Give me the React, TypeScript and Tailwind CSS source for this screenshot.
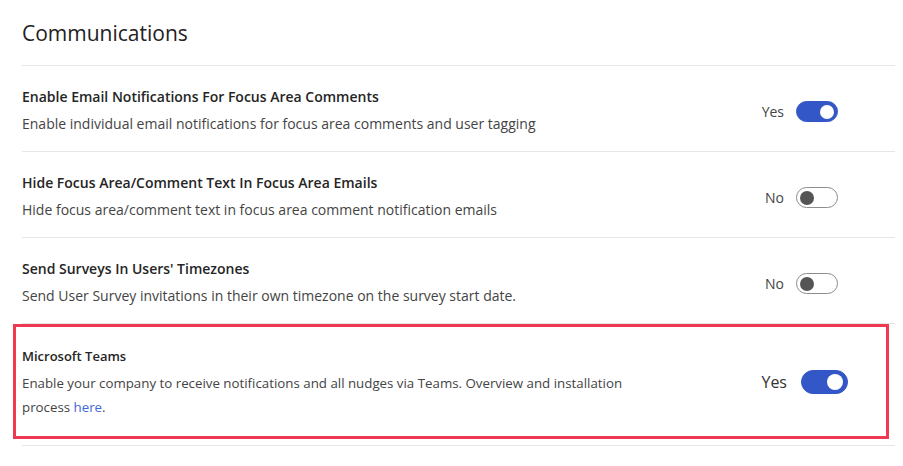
import { useState } from "react";

type Setting = {
  title: string;
  description: string;
  enabled: boolean;
};

const settings: Setting[] = [
  {
    title: "Enable Email Notifications For Focus Area Comments",
    description:
      "Enable individual email notifications for focus area comments and user tagging",
    enabled: true,
  },
  {
    title: "Hide Focus Area/Comment Text In Focus Area Emails",
    description: "Hide focus area/comment text in focus area comment notification emails",
    enabled: false,
  },
  {
    title: "Send Surveys In Users' Timezones",
    description:
      "Send User Survey invitations in their own timezone on the survey start date.",
    enabled: false,
  },
];

function Toggle({
  on,
  onClick,
  big,
}: {
  on: boolean;
  onClick: () => void;
  big?: boolean;
}) {
  return (
    <button
      type="button"
      onClick={onClick}
      className={`flex items-center rounded-full border ${
        big ? "h-[24px] w-[47px] px-[4px]" : "h-[21px] w-[42px] px-[3px]"
      } ${
        on
          ? "justify-end border-[#3457c8] bg-[#3457c8]"
          : "justify-start border-[#8c8c8c] bg-white"
      }`}
    >
      <span
        className={`block rounded-full ${big ? "h-[16px] w-[16px]" : "h-[14px] w-[14px]"} ${
          on ? "bg-white" : "bg-[#555555]"
        }`}
      />
    </button>
  );
}

export default function App() {
  const [values, setValues] = useState(settings.map((s) => s.enabled));
  const [teams, setTeams] = useState(true);

  return (
    <div
      className="h-[466px] w-[903px] overflow-hidden bg-white text-[#242424]"
      style={{ fontFamily: '"Open Sans", "Noto Sans", sans-serif' }}
    >
      <div className="ml-[22px] w-[873px]">
        <div className="flex h-[66px] items-center border-b border-[#e6e6e6]">
          <h1 className="text-[21px] font-medium leading-[28px] text-[#222]">
            Communications
          </h1>
        </div>

        {settings.map((s, i) => (
          <div
            key={s.title}
            className="flex h-[86px] items-center justify-between border-b border-[#e6e6e6] pr-[57px] pt-[3px]"
          >
            <div className="flex flex-col">
              <div className="text-[14px] font-semibold leading-[20px] text-[#252525]">
                {s.title}
              </div>
              <div className="mt-[7px] text-[14px] leading-[20px] text-[#444]">
                {s.description}
              </div>
            </div>
            <div className="flex items-center gap-[12px] pt-[3px]">
              <span className="text-[14px] text-[#444]">{values[i] ? "Yes" : "No"}</span>
              <Toggle
                on={values[i]}
                onClick={() =>
                  setValues((v) => v.map((x, j) => (j === i ? !x : x)))
                }
              />
            </div>
          </div>
        ))}

        <div className="border-b border-[#e6e6e6] pb-[6px]">
          <div className="-ml-[9px] flex h-[115px] w-[876px] items-center justify-between border-[3px] border-[#ee3a50] pl-[6px] pr-[38px]">
            <div className="flex w-[620px] flex-col pt-[2px]">
              <div className="text-[13px] font-semibold leading-[20px] text-[#252525]">
                Microsoft Teams
              </div>
              <div className="mt-[5px] text-[13.3px] leading-[24px] text-[#444]">
                Enable your company to receive notifications and all nudges via Teams.
                Overview and installation process{" "}
                <a href="#" className="text-[#3e68d8]">
                  here
                </a>
                .
              </div>
            </div>
            <div className="flex items-center gap-[14px]">
              <span className="text-[16px] text-[#333]">{teams ? "Yes" : "No"}</span>
              <Toggle big on={teams} onClick={() => setTeams((t) => !t)} />
            </div>
          </div>
        </div>
      </div>
    </div>
  );
}
